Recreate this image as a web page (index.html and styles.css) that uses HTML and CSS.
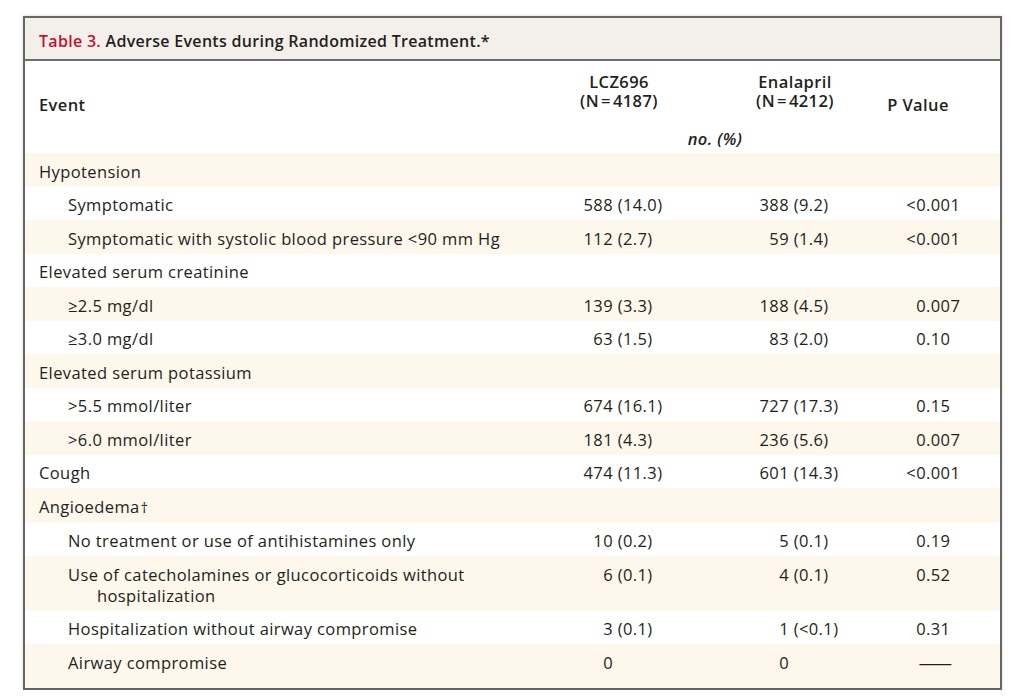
FILE: index.html
```html
<!DOCTYPE html>
<html lang="en">
<head>
<meta charset="utf-8">
<title>Table 3. Adverse Events during Randomized Treatment</title>
<link rel="stylesheet" href="styles.css">
</head>
<body>
<div class="page">
  <div class="box">
    <div class="title"><span class="tnum">Table 3.</span> Adverse Events during Randomized Treatment.*</div>
    <table class="data">
      <colgroup>
        <col class="c-label"><col class="c-lcz"><col class="c-ena"><col class="c-p">
      </colgroup>
      <thead>
        <tr class="h1">
          <th class="h-event">Event</th>
          <th class="h-lcz"><span class="hl">LCZ696</span><span class="hl">(N&#8202;=&#8202;4187)</span></th>
          <th class="h-ena"><span class="hl">Enalapril</span><span class="hl">(N&#8202;=&#8202;4212)</span></th>
          <th class="h-p">P Value</th>
        </tr>
        <tr class="h2">
          <th></th>
          <th class="h-unit" colspan="2">no. (%)</th>
          <th></th>
        </tr>
      </thead>
      <tbody>
        <tr><td class="lbl">Hypotension</td><td></td><td></td><td></td></tr>
        <tr><td class="lbl sub">Symptomatic</td><td class="lcz"><span class="n">588</span> (14.0)</td><td class="ena"><span class="n">388</span> (9.2)</td><td class="p"><span class="i">&lt;0</span>.001</td></tr>
        <tr><td class="lbl sub">Symptomatic with systolic blood pressure &lt;90 mm Hg</td><td class="lcz"><span class="n">112</span> (2.7)</td><td class="ena"><span class="n">59</span> (1.4)</td><td class="p"><span class="i">&lt;0</span>.001</td></tr>
        <tr><td class="lbl">Elevated serum creatinine</td><td></td><td></td><td></td></tr>
        <tr><td class="lbl sub">≥2.5 mg/dl</td><td class="lcz"><span class="n">139</span> (3.3)</td><td class="ena"><span class="n">188</span> (4.5)</td><td class="p"><span class="i">0</span>.007</td></tr>
        <tr><td class="lbl sub">≥3.0 mg/dl</td><td class="lcz"><span class="n">63</span> (1.5)</td><td class="ena"><span class="n">83</span> (2.0)</td><td class="p"><span class="i">0</span>.10</td></tr>
        <tr><td class="lbl">Elevated serum potassium</td><td></td><td></td><td></td></tr>
        <tr><td class="lbl sub">&gt;5.5 mmol/liter</td><td class="lcz"><span class="n">674</span> (16.1)</td><td class="ena"><span class="n">727</span> (17.3)</td><td class="p"><span class="i">0</span>.15</td></tr>
        <tr><td class="lbl sub">&gt;6.0 mmol/liter</td><td class="lcz"><span class="n">181</span> (4.3)</td><td class="ena"><span class="n">236</span> (5.6)</td><td class="p"><span class="i">0</span>.007</td></tr>
        <tr><td class="lbl">Cough</td><td class="lcz"><span class="n">474</span> (11.3)</td><td class="ena"><span class="n">601</span> (14.3)</td><td class="p"><span class="i">&lt;0</span>.001</td></tr>
        <tr><td class="lbl">Angioedema<span class="dag">†</span></td><td></td><td></td><td></td></tr>
        <tr><td class="lbl sub">No treatment or use of antihistamines only</td><td class="lcz"><span class="n">10</span> (0.2)</td><td class="ena"><span class="n">5</span> (0.1)</td><td class="p"><span class="i">0</span>.19</td></tr>
        <tr><td class="lbl sub hang">Use of catecholamines or glucocorticoids without<br>hospitalization</td><td class="lcz"><span class="n">6</span> (0.1)</td><td class="ena"><span class="n">4</span> (0.1)</td><td class="p"><span class="i">0</span>.52</td></tr>
        <tr><td class="lbl sub">Hospitalization without airway compromise</td><td class="lcz"><span class="n">3</span> (0.1)</td><td class="ena"><span class="n">1</span> (&lt;0.1)</td><td class="p"><span class="i">0</span>.31</td></tr>
        <tr class="last"><td class="lbl sub">Airway compromise</td><td class="lcz"><span class="n">0</span></td><td class="ena"><span class="n">0</span></td><td class="p dashcell"><span class="dash">—</span></td></tr>
      </tbody>
    </table>
  </div>
</div>
</body>
</html>
```

FILE: styles.css
```css
html, body {
  margin: 0;
  padding: 0;
  background: #ffffff;
}

body {
  font-family: "Open Sans", "Noto Sans", sans-serif;
  font-size: 16.5px;
  letter-spacing: 0.4px;
  color: #231f20;
}

.page {
  padding: 16px 0 0 23px;
}

.box {
  width: 975px;
  border: 2px solid #666666;
  box-shadow: 0 0 3px rgba(0, 0, 0, 0.18);
  background: #ffffff;
}

.title {
  background: #f3f0eb;
  border-bottom: 2px solid #6e6e6e;
  padding: 13px 14px 7px;
  line-height: 21px;
  font-weight: 600;
  font-size: 16px;
  letter-spacing: 0.3px;
}

.tnum {
  color: #c8102e;
}

.data {
  width: 975px;
  border-collapse: collapse;
  table-layout: fixed;
}

.c-label { width: 535px; }
.c-lcz { width: 160px; }
.c-ena { width: 150px; }
.c-p { width: 130px; }

.data th {
  font-weight: 600;
  padding: 0;
  line-height: 19px;
}

.hl {
  display: block;
}

.h1 th {
  padding-top: 11px;
  padding-bottom: 14px;
  vertical-align: top;
}

.h1 .h-event {
  text-align: left;
  padding-left: 14px;
  vertical-align: bottom;
  padding-bottom: 10px;
}

.h1 .h-lcz {
  text-align: center;
  padding-right: 42px;
}

.h1 .h-ena {
  text-align: center;
}

.h1 .h-p {
  text-align: center;
  padding-right: 34px;
  vertical-align: bottom;
  padding-bottom: 10px;
}

.h2 th {
  line-height: 21px;
  padding-top: 4px;
  padding-bottom: 4px;
}

.h-unit {
  font-weight: 400;
  font-style: italic;
  text-align: center;
  padding-right: 8px;
}

.data td {
  padding: 7.5px 0 5px;
  line-height: 21px;
  vertical-align: top;
  white-space: nowrap;
}

.data tbody tr:nth-child(odd) {
  background: #fdf7ec;
}

.data tbody tr.last td {
  padding-bottom: 15.5px;
}

.lbl {
  padding-left: 14px !important;
}

.lbl.sub {
  padding-left: 43px !important;
}

.lbl.hang {
  padding-left: 72px !important;
  text-indent: -29px;
}

.dag {
  font-size: 0.85em;
  margin-left: 1px;
}

.n {
  display: inline-block;
  text-align: right;
}

.lcz .n { width: 53px; }
.ena .n { width: 69px; }

.p .i {
  display: inline-block;
  width: 56px;
  text-align: right;
}

.dashcell {
  padding-left: 48px !important;
}

.dash {
  display: inline-block;
  transform: scaleX(2.1);
  transform-origin: left center;
}
```
